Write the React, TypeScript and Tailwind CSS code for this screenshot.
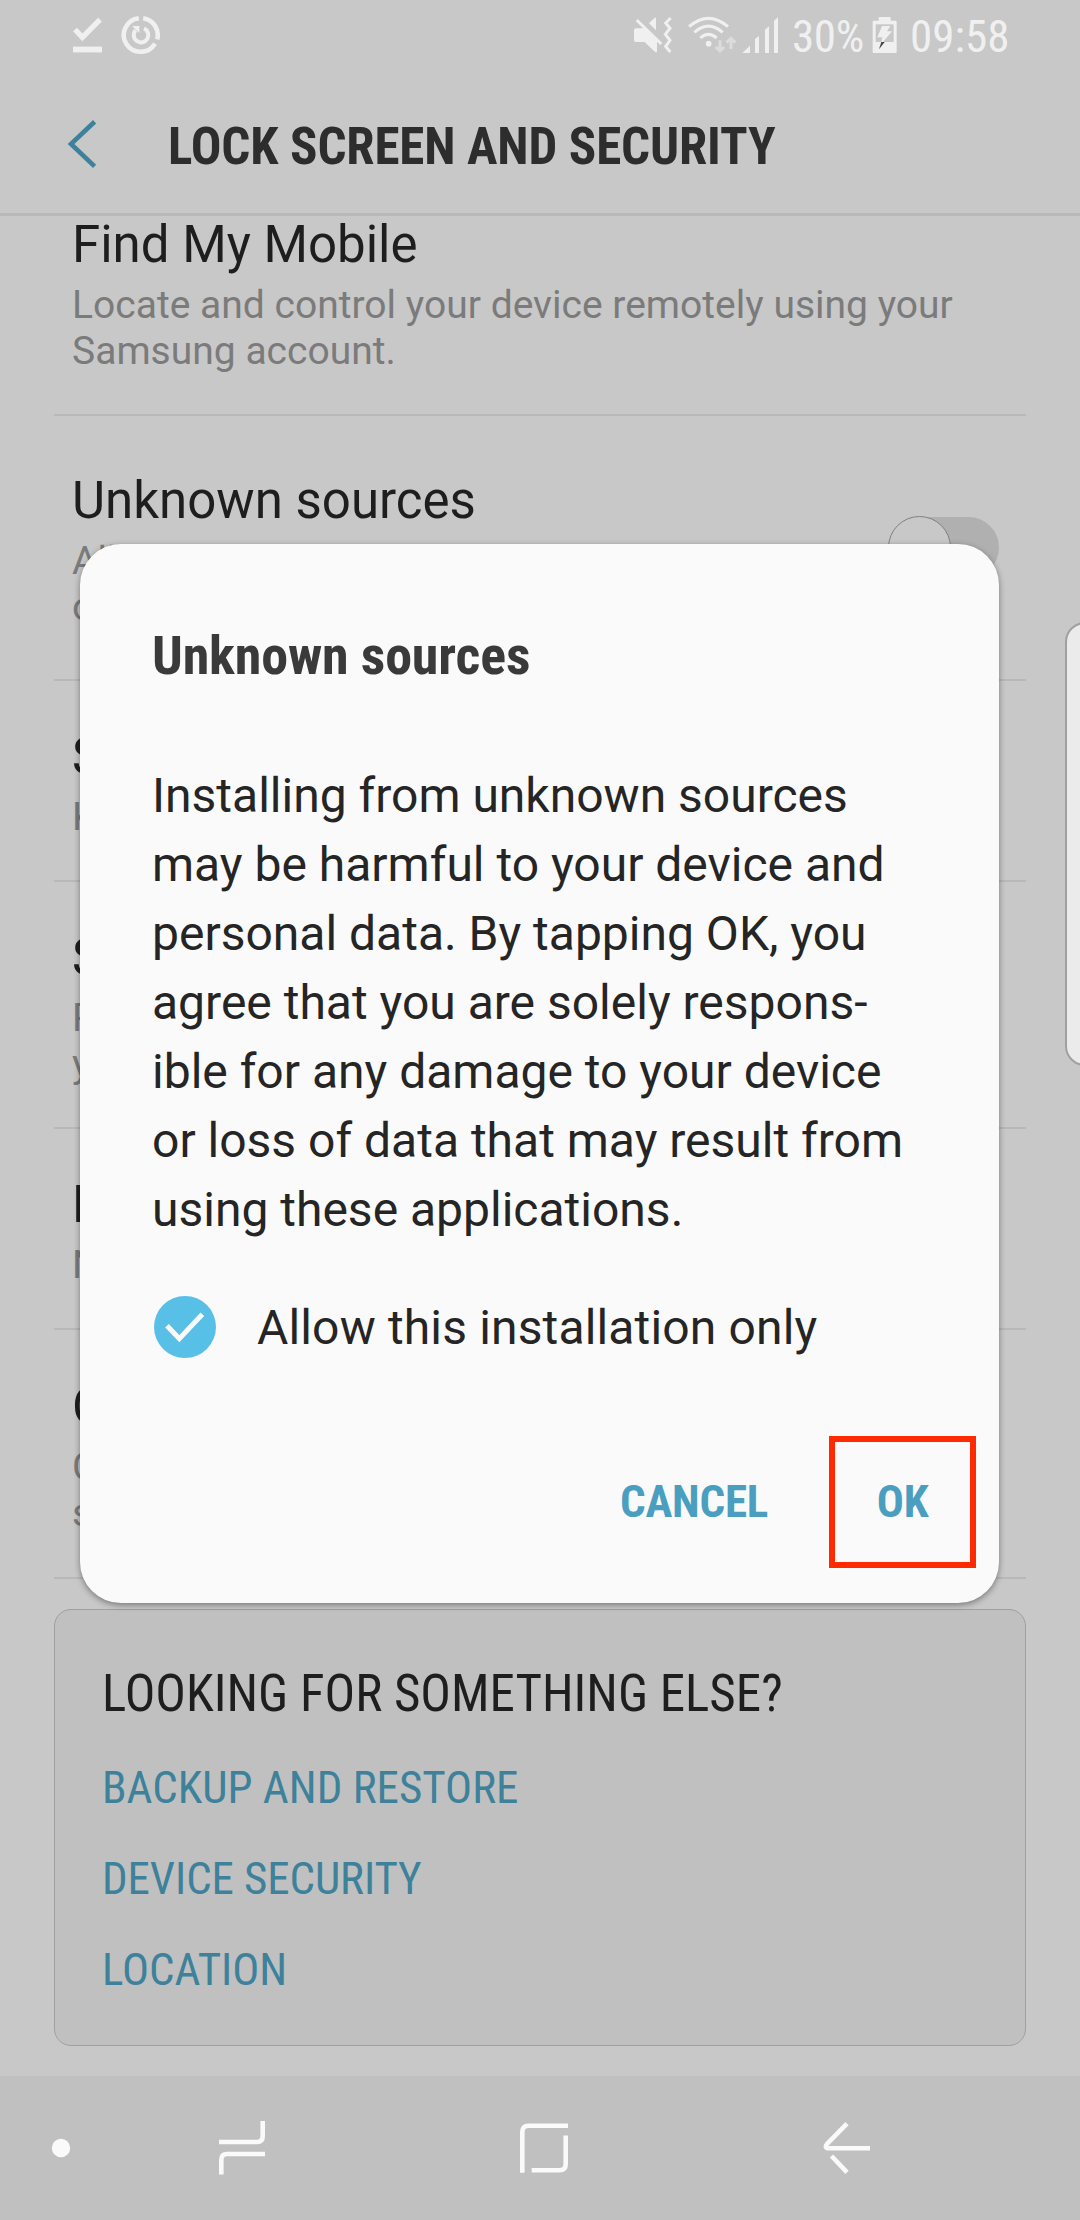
import React from "react";

type RowProps = {
  title: string;
  lines: string[];
  className?: string;
  toggle?: boolean;
};

function Row({ title, lines, className = "", toggle = false }: RowProps) {
  return (
    <div className={`mx-[54px] flex shrink-0 items-center justify-between border-b-2 border-[#b8b8b8] pr-[27px] pl-[18px] ${className}`}>
      <div className="whitespace-nowrap">
        <h2 className="mb-[7px] text-[51px] leading-[61px] text-[#1e1e1e]">{title}</h2>
        {lines.map((line) => (
          <p key={line} className="text-[39px] leading-[46px] tracking-[0.01px] text-[#7b7b7b]">
            {line}
          </p>
        ))}
      </div>
      {toggle && (
        <div className="-mt-[5px] flex h-[61px] w-[109px] items-center rounded-full bg-[#b0b0b0]">
          <div className="-my-px -ml-[2px] size-[63px] shrink-0 rounded-full border border-[#808080] bg-[#c8c8c8]" />
        </div>
      )}
    </div>
  );
}

const condensed = "font-['Roboto_Condensed',Roboto,sans-serif] [font-stretch:75%] whitespace-nowrap";

function StatusBar() {
  return (
    <div className="flex h-[74px] shrink-0 text-[#f0f0f0]">
      <svg className="ml-[72px] h-[74px] w-[32px]" viewBox="72 0 32 74" fill="none" stroke="currentColor">
        <path d="M75 29.5 82.4 37.3 100 19.7" strokeWidth="5.4" />
        <path d="M73 49.5H102" strokeWidth="5.8" />
      </svg>
      <svg className="ml-[17px] h-[74px] w-[40px]" viewBox="121 0 40 74" fill="none" stroke="currentColor">
        <path d="M143.2 18.3A16.8 16.8 0 0 1 157.2 39.3M155 43.6A16.8 16.8 0 1 1 138.8 18.3" strokeWidth="4.6" />
        <path d="M144 28.4A7.3 7.3 0 1 1 135.6 30.2" strokeWidth="4" />
        <path d="M132 26H139.4V33Z" fill="currentColor" stroke="none" />
      </svg>
      <svg className="ml-[472px] h-[74px] w-[147px]" viewBox="99 0 441 222" fill="currentColor">
        <path d="M102 91q0-6 6-6H126L135 82 171 121V157H166L134 126H108q-6 0-6-6Z" />
        <path d="M147 70 164 53H168V91Z" />
        <path d="M110 60 184 132" stroke="currentColor" strokeWidth="9" />
        <path d="M212 54 197 69 210 85 196 103 210 121 197 139 211 156" fill="none" stroke="currentColor" strokeWidth="9" />
        <g fill="none" stroke="currentColor" strokeWidth="9">
          <path d="M267 80Q325 30 384 80" />
          <path d="M283 97Q325 60 368 97" />
          <path d="M301 114Q325 92 350 114" />
        </g>
        <circle cx="326" cy="131" r="8.5" />
        <g fill="none" stroke="#dcdcdc" strokeWidth="9">
          <path d="M360 121V154M347 141 360 153 373 141" />
          <path d="M393 147V115M379 128 393 115 406 128" />
        </g>
        <path d="M427 159 450 137V159ZM465 159V117L477 108V159ZM495 159V89L507 79V159ZM522 159V62L534 52V159Z" />
      </svg>
      <span className={`ml-[12px] mt-[10px] w-[73px] text-[45px] leading-[54px] tracking-[-0.4px] ${condensed}`}>30%</span>
      <svg className="ml-[7px] h-[74px] w-[26px]" viewBox="817 0 78 222" fill="currentColor">
        <path d="M837 62V54q0-3 3-3H870q3 0 3 3V62H888q3 0 3 3V156q0 3-3 3H822q-3 0-3-3V65q0-3 3-3Z" />
        <path d="M828 73H882V126H828Z" fill="#c8c8c8" />
        <path d="M847 78H872L862 94H877L850 126H845L848 112H833Z" />
        <path d="M845 126H855L838 148Z" fill="#444" />
      </svg>
      <span className={`ml-[12px] mt-[10px] text-[45px] leading-[54px] ${condensed}`}>09:58</span>
    </div>
  );
}

function Dialog() {
  return (
    <div className="absolute top-[544px] left-[80px] flex h-[1059px] w-[919px] flex-col rounded-[41px] bg-[#fafafa] pl-[72px] shadow-[0_2px_6px_rgba(0,0,0,0.4)]">
      <h1 className={`mt-[80px] text-[54px] leading-[64px] font-bold tracking-[-0.14px] text-[#3a3a3a] ${condensed}`}>Unknown sources</h1>
      <p className="mt-[73px] text-[48px] leading-[69px] whitespace-nowrap text-[#252525]">
        Installing from unknown sources
        <br />
        may be harmful to your device and
        <br />
        personal data. By tapping OK, you
        <br />
        agree that you are solely respons-
        <br />
        ible for any damage to your device
        <br />
        or loss of data that may result from
        <br />
        using these applications.
      </p>
      <label className="mt-[52px] flex h-[62px] items-center">
        <svg className="ml-[2px] size-[62px]" viewBox="0 0 186 186">
          <circle cx="93" cy="93" r="93" fill="#58c0e6" />
          <path d="M39 89 76 128 145 55" fill="none" stroke="#fafafa" strokeWidth="15" />
        </svg>
        <span className="mt-[2px] ml-[41px] text-[48px] leading-[60px] tracking-[0.15px] text-[#252525]">Allow this installation only</span>
      </label>
      <div className={`mt-[78px] flex items-center text-[45px] font-bold tracking-[-0.2px] text-[#4a9fc0] ${condensed}`}>
        <button className="ml-[468px] w-[148px] text-left">CANCEL</button>
        <button className="ml-[61px] h-[132px] w-[147px] border-[6px] border-[#ff2a00] text-center">OK</button>
      </div>
    </div>
  );
}

export default function App() {
  return (
    <div className="relative flex h-[2220px] w-[1080px] flex-col overflow-hidden bg-[#c8c8c8] font-[Roboto,sans-serif]">
      <StatusBar />
      <header className="flex h-[142px] shrink-0 items-center border-b-[3px] border-[#b8b8b8]">
        <svg className="ml-[66px] h-[50px] w-[32px]" viewBox="66 119 32 50" fill="none" stroke="#3d819b" strokeWidth="4.6">
          <path d="M94.6 121.8 71 144 94.6 166.4" />
        </svg>
        <h1 className={`mt-[6px] ml-[70px] text-[51px] leading-[61px] font-bold tracking-[-0.12px] text-[#2d2d2d] ${condensed}`}>LOCK SCREEN AND SECURITY</h1>
      </header>

      <main className="flex flex-1 flex-col overflow-hidden">
        <Row className="-mt-[2px] h-[202px] pb-[40px]" title="Find My Mobile" lines={["Locate and control your device remotely using your", "Samsung account."]} />
        <Row className="h-[265px] pt-[5px]" toggle title="Unknown sources" lines={["Allow installation of apps from sources", "other than the Play Store."]} />
        <Row className="h-[201px] pt-[5px]" title="Secure Folder" lines={["Keep your private files and apps safe."]} />
        <Row className="h-[247px] pt-[5px]" title="Secure startup" lines={["Protect your device by using a screen lock when", "your device turns on."]} />
        <Row className="h-[201px] pt-[5px]" title="Encrypt SD card" lines={["No SD card inserted."]} />
        <Row className="h-[249px] pt-[5px]" title="Other security settings" lines={["Change other security settings, such as those for", "security updates."]} />
        <section className={`mx-[54px] mt-[30px] flex h-[437px] shrink-0 flex-col rounded-[17px] border border-[#a0a0a0] bg-[#c0c0c0] pl-[47px] ${condensed}`}>
          <h2 className="mt-[53px] text-[51px] leading-[61px] text-[#1e1e1e]">LOOKING FOR SOMETHING ELSE?</h2>
          <nav className="mt-[18px] flex flex-col text-[45px] leading-[91px] text-[#3d819b]">
            <a>BACKUP AND RESTORE</a>
            <a className="tracking-[-0.1px]">DEVICE SECURITY</a>
            <a>LOCATION</a>
          </nav>
        </section>
      </main>

      <footer className="h-[144px] shrink-0 bg-[#c0c0c0]">
        <svg className="h-[144px] w-[1080px]" viewBox="0 2076 1080 144" fill="none" stroke="#fafafa" strokeWidth="4.6">
          <circle cx="61" cy="2148" r="9.2" fill="#fafafa" stroke="none" />
          <path d="M219 2142H257Q262.7 2142 262.7 2136V2121M265 2154H227Q221.3 2154 221.3 2160V2174.5" />
          <path d="M522.3 2172.7V2132Q522.3 2125.7 528.5 2125.7H568M565.7 2135.5V2164Q565.7 2170.3 559.5 2170.3H531.7" />
          <path d="M870 2148.3H829Q824 2148.3 827 2144L847 2123.6M831.5 2156 847 2172.3" />
        </svg>
      </footer>

      <div className="absolute top-[622px] left-[1065px] h-[444px] w-[40px] rounded-[20px] border-2 border-[#a0a0a0] bg-[#ebebeb]" />
      <Dialog />
    </div>
  );
}
